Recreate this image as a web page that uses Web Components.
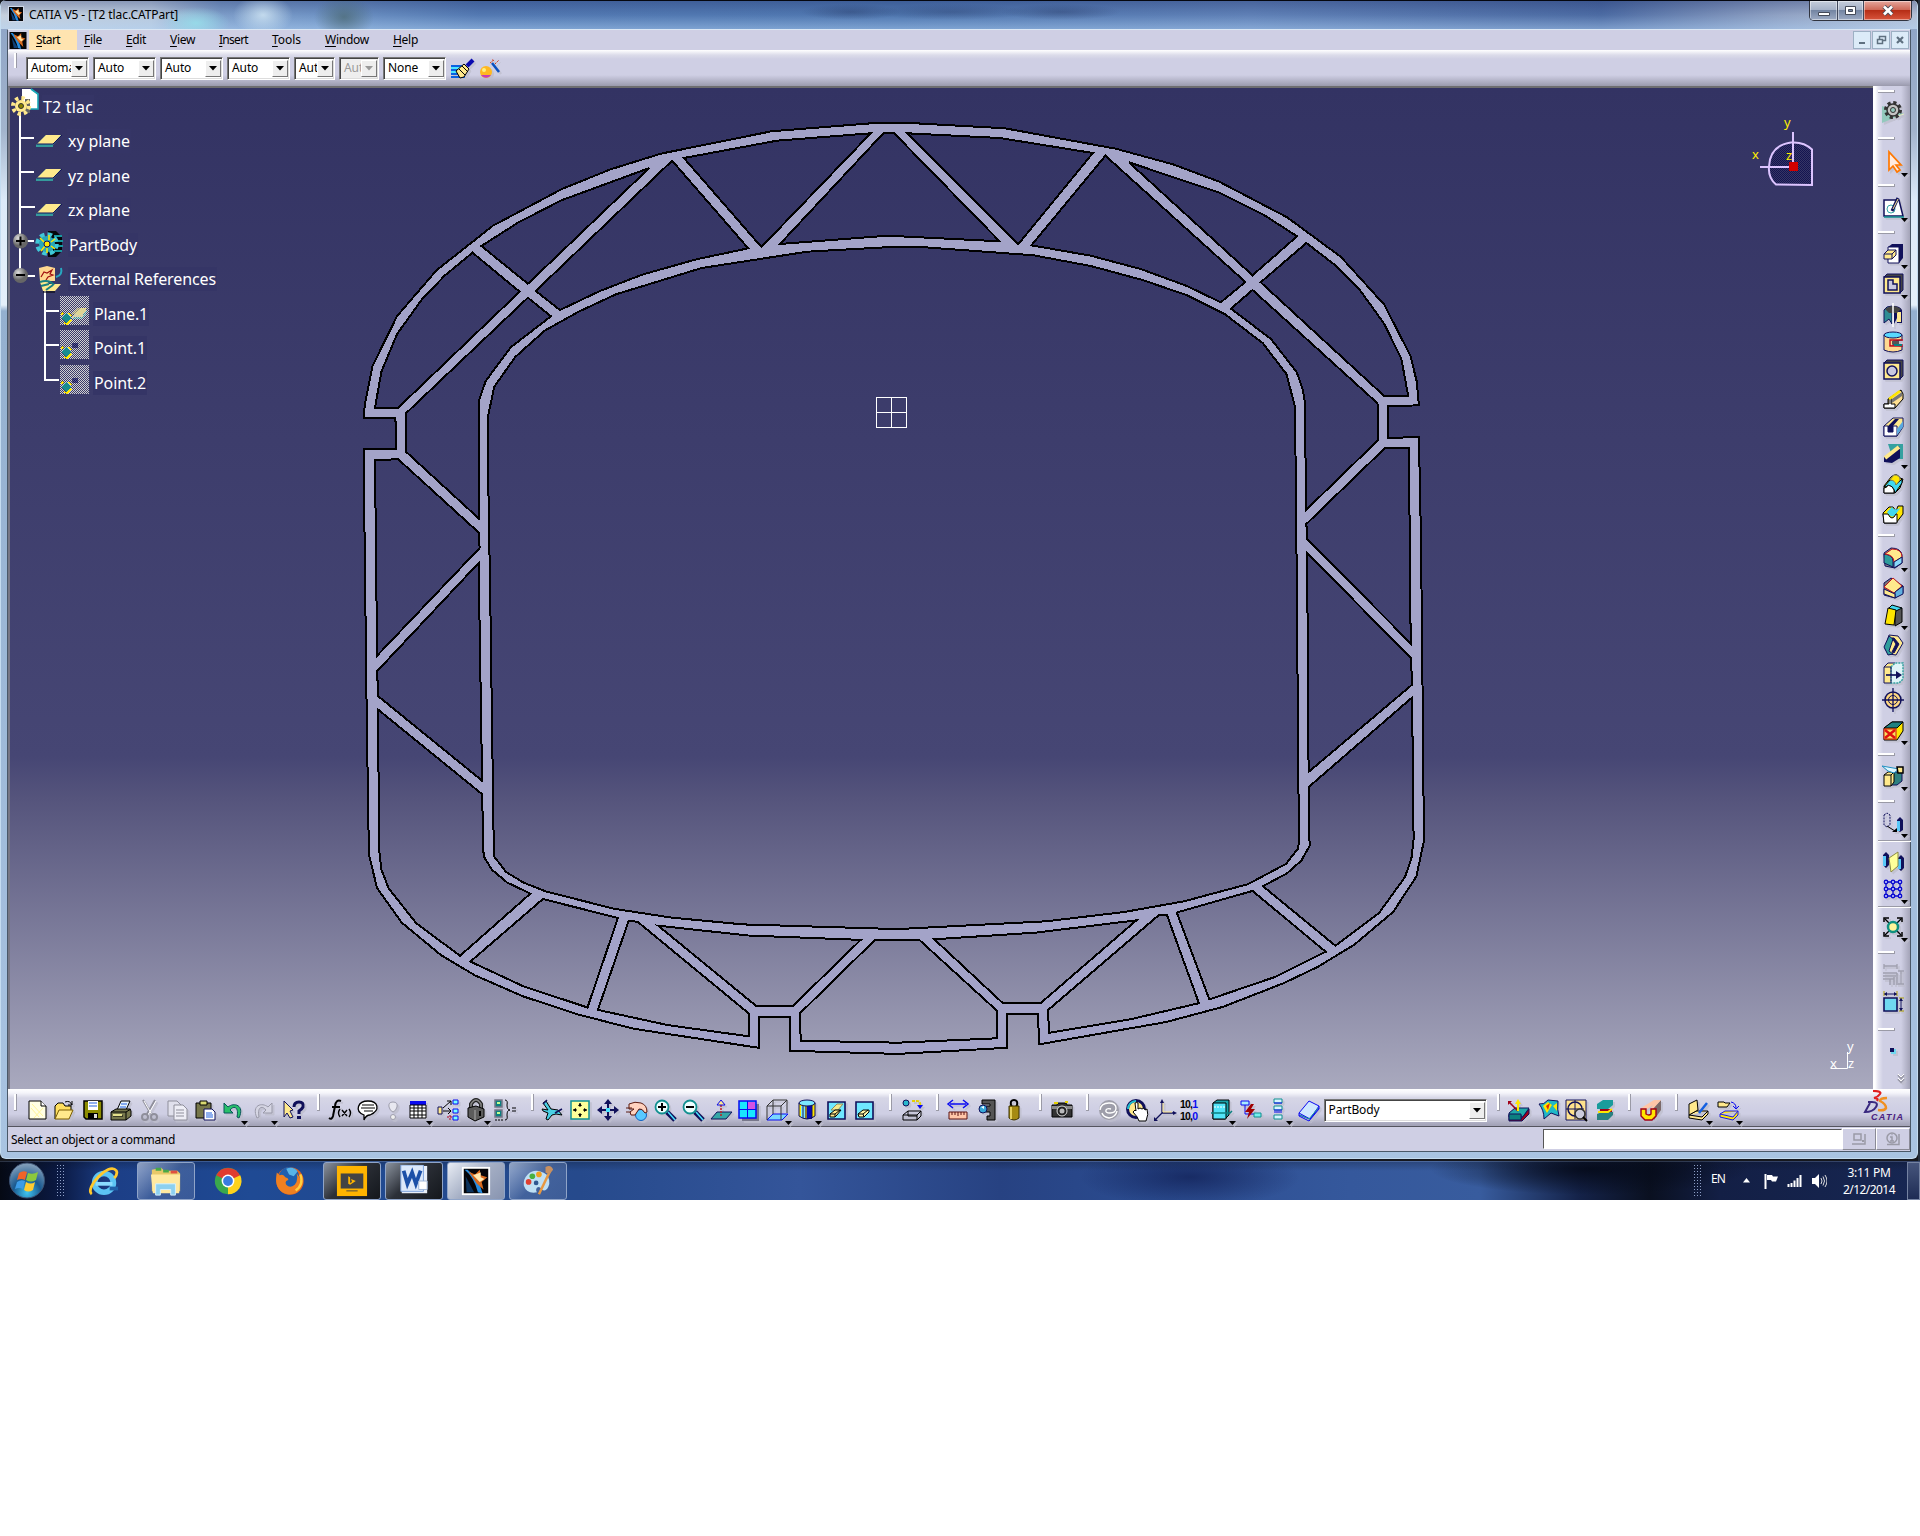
<!DOCTYPE html>
<html lang="en">
<head>
<meta charset="utf-8">
<title>CATIA V5 - [T2 tlac.CATPart]</title>
<style>
    body {
        margin: 0;
        background: #fff;
        font-family: "Noto Sans", "Open Sans", sans-serif;
        font-size: 12px;
        color: #000;
    }
</style>
</head>
<body>
<catia-window></catia-window>
<task-bar></task-bar>

<script>
// 24x24 drawings, one entry per command
const ICONS = {
    // standard
    new: '<path d="M4 3h12l5 5v13H4z" fill="#ffffe4" stroke="#000"/><path d="M16 3v5h5" fill="#fff" stroke="#000"/><path d="M6 10l8 9M7 6l11 12M9 20l9-10" stroke="#fff59a"/>',
    open: '<path d="M3 21V8l3-3h5l2 3h6v4" fill="#ffdf60" stroke="#000"/><path d="M3 21l4-9h14l-4 9z" fill="#ffe98c" stroke="#7a5c00"/><path d="M13 4q5-2 7 3m0-4v4h-4" fill="none" stroke="#000"/>',
    save: '<path d="M3 3h18v18H5l-2-2z" fill="#8c8c00" stroke="#000" stroke-width="1.5"/><path d="M7 3h10v9H7z" fill="#fff"/><path d="M8 5h8M8 8h8" stroke="#2060e0"/><path d="M7 15h10v6H7z" fill="#000"/><path d="M13 16h3v4h-3z" fill="#ddd"/>',
    print: '<path d="M8 12l4-9h9l-4 9z" fill="#e8f4ff" stroke="#000"/><path d="M12 6h6M11 9h6" stroke="#2060e0"/><path d="M2 14l5-3h14l1 2v5l-5 4H2z" fill="#77774d" stroke="#000"/><path d="M2 14h15v8M17 14l5-3M4 18h10" fill="none" stroke="#000"/><path d="M4 16h9v2H4z" fill="#e5e08b"/>',
    cut: '<path d="M6 2l8 14M18 2l-8 14" stroke="#8f8f9b" stroke-width="2"/><path d="M7 3l8 14M19 3l-8 14" stroke="#fff"/><circle cx="8" cy="19" r="3" fill="none" stroke="#8f8f9b" stroke-width="2"/><circle cx="17" cy="19" r="3" fill="none" stroke="#8f8f9b" stroke-width="2"/>',
    copy: '<path d="M3 3h9l4 4v11H3z" fill="#e0e0ec" stroke="#8f8f9b"/><path d="M9 7h9l4 4v11H9z" fill="#eeeef6" stroke="#8f8f9b"/><path d="M11 12h8M11 15h8M11 18h8" stroke="#8f8f9b"/>',
    paste: '<path d="M3 5h15v15H3z" fill="#76764a" stroke="#000"/><path d="M7 3h7v4H7z" fill="#d8d870" stroke="#000"/><path d="M11 11h8l3 3v8H11z" fill="#fff" stroke="#10105a"/><path d="M13 15h6M13 17h7M13 19h7" stroke="#2060e0"/>',
    undo: '<path d="M3 5v10h9l-3-3c4-5 9-3 7 7l2 1c6-13-5-16-11-11z" fill="#28c06a" stroke="#07545a"/>',
    redo: '<path d="M21 5v10h-9l3-3c-4-5-9-3-7 7l-2 1C0 7 11 4 17 9z" fill="#d5d5e3" stroke="#9999a8"/>',
    help: '<path d="M3 3l9 9-3 1 3 6-3 1-3-5-3 4z" fill="#ffe98c" stroke="#10105a"/><path d="M13 9q0-5 5-5t4 5q-1 2-4 4v3" fill="none" stroke="#10105a" stroke-width="3"/><path d="M16 18h4v3h-4z" fill="#10105a"/>',
    fx: '<path d="M13 3q-5-2-6 5L5 18q-1 4-4 2M4 9h8" fill="none" stroke="#000" stroke-width="2"/><path d="M12 11q-3 4 0 8M21 11q3 4 0 8M14 12l5 6M19 12l-5 6" fill="none" stroke="#000" stroke-width="1.4"/>',
    chat: '<path d="M8 17C-2 13 2 3 12 3s13 9 2 14q-4 0-6 5z" fill="#fff" stroke="#000" stroke-width="1.3"/><path d="M6 7h12M5 10h14M8 13h9" stroke="#000" stroke-width="1.2"/>',
    bulb: '<path d="M12 4q5 0 4 5-1 4-4 5-3-1-4-5-1-5 4-5z" fill="#e8e8f0" stroke="#9c9cab"/><circle cx="12" cy="19" r="2.5" fill="#eee" stroke="#9c9cab"/>',
    table: '<path d="M4 3h16v4H4z" fill="#0a0af0"/><path d="M4 7h16v13H4z" fill="#fff" stroke="#000"/><path d="M4 10h16M4 13h16M4 17h16M8 7v13M12 7v13M16 7v13" stroke="#000"/>',
    links: '<path d="M2 9h4v7H2z" fill="#ffe98c" stroke="#10105a"/><path d="M7 10l8-7m-4 0h4v4M7 13h8m-3-3l3 3-3 3" fill="none" stroke="#000"/><path d="M14 17v5M11 19h5" stroke="#b00020" stroke-dasharray="2 1"/><path d="M17 2h5v4h-5zM17 11h5v4h-5zM17 18h5v4h-5z" fill="#7ff" stroke="#0a0af0"/>',
    lock: '<path d="M7 10V6q5-8 10 0v4" fill="none" stroke="#222" stroke-width="4"/><path d="M7 10V6q5-8 10 0v4" fill="none" stroke="#888" stroke-width="1.500"/><path d="M4 10l8-2 8 3v8l-9 4-7-4z" fill="#5c5c5c" stroke="#000"/><path d="M11 12v10" stroke="#aaa"/><path d="M15 13h2v5h-2z" fill="#000"/>',
    braces: '<path d="M2 2h7v7H2zM2 12h7v7H2z" fill="#0c8080" stroke="#778" stroke-width="1.5"/><path d="M4 4h3v2H4zM4 14h3v2H4z" fill="#c2ff90"/><path d="M2 22h8" stroke="#000" stroke-dasharray="2 1"/><path d="M12 2q3 0 2 5 0 5 3 5-3 0-3 5 1 5-2 5M19 10h4M19 13h4" fill="none" stroke="#000"/>',
    // view
    fly: '<path d="M3 5l3-2 5 8 7 1 4 5-6-1-4 1-4 5-2-1 2-6-5-2-1-2 6 1z" fill="#4ad0e4" stroke="#000"/><path d="M15 15l7-4M3 6l4-4" stroke="#10105a" stroke-width="1.5"/>',
    fit: '<path d="M3 3h18v18H3z" fill="#ffff9a" stroke="#109090" stroke-width="1.5"/><path d="M12 5v4m0 6v4M5 12h4m6 0h4" stroke="#000"/><path d="M10 8l2-3 2 3zM10 16l2 3 2-3zM8 10l-3 2 3 2zM16 10l3 2-3 2z" fill="#000"/>',
    pan: '<path d="M12 3v18M3 12h18" stroke="#10105a" stroke-width="2"/><path d="M8 6l4-5 4 5zM8 18l4 5 4-5zM6 8l-5 4 5 4zM18 8l5 4-5 4z" fill="#10105a"/><path d="M10 10h4v4h-4z" fill="#4ae4ff"/>',
    rotate: '<circle cx="16" cy="17" r="5.500" fill="#59c9ff" stroke="#1060c0"/><path d="M4 6q6-3 12-1 6 2 6 9l-2 1q-3-5-6-4l-4 6H6l-1-3 4-3H4z" fill="#ffd2bf" stroke="#5a1a10"/><path d="M1 10h6M1 14h5" stroke="#5a1a10"/>',
    zoomIn: '<path d="M14 14l8 8" stroke="#10105a" stroke-width="5"/><path d="M15 14l7 8" stroke="#4ae4ff" stroke-width="1.5"/><circle cx="9" cy="9" r="6.5" fill="#eff" stroke="#109090" stroke-width="1.8"/><path d="M9 5v8M5 9h8" stroke="#000" stroke-width="2"/>',
    zoomOut: '<path d="M14 14l8 8" stroke="#10105a" stroke-width="5"/><path d="M15 14l7 8" stroke="#4ae4ff" stroke-width="1.5"/><circle cx="9" cy="9" r="6.5" fill="#eff" stroke="#109090" stroke-width="1.8"/><path d="M5 9h8" stroke="#000" stroke-width="2"/>',
    normal: '<path d="M2 21l6-7h15l-6 7z" fill="#35a7a7" stroke="#10105a"/><path d="M12 18V6" stroke="#c02020" stroke-width="1.5" stroke-dasharray="2 1"/><path d="M8 7l4-5 4 5z" fill="#ffe98c" stroke="#0a0af0"/>',
    multi: '<path d="M6 6h17v17H6z" fill="#77778a"/><path d="M3 3h17v17H3z" fill="#18e8ff" stroke="#0a0af0" stroke-width="1.5"/><path d="M12 4h7v7h-7z" fill="#d452e4"/><path d="M3 11.500h17M11.500 3v17" stroke="#0a0af0"/>',
    iso: '<path d="M2 22l6-6h15l-6 6z" fill="#7ad8ff" stroke="#0a0af0"/><path d="M2 22V8l6-6h14v13M2 8h14l6-6M16 8v14M8 2v14" fill="none" stroke="#333"/>',
    shading: '<path d="M4 5v13q8 6 16 0V5z" fill="#ffe600"/><path d="M6 8h4v12H6z" fill="#7ce8ff"/><path d="M12 8h5v13h-5z" fill="#0a0ab0"/><ellipse cx="12" cy="5" rx="8" ry="3" fill="#7ce8ff" stroke="#10105a"/><path d="M4 5v13q8 6 16 0V5M8 8v12M11 8v13M17 7v13" fill="none" stroke="#10105a"/>',
    hide: '<path d="M4 4h17v17H4z" fill="#6fe8ff" stroke="#10105a" stroke-width="1.6"/><path d="M7 12l6-6h6l-5 6z" fill="#f4e98c" stroke="#8a8a60"/><path d="M6 16l5-4h6l-4 5-2 2H6z" fill="#ffe98c" stroke="#000"/><path d="M6 16h5v3M11 16l5-4" fill="none" stroke="#000"/>',
    swap: '<path d="M4 4h17v17H4z" fill="#6fe8ff" stroke="#10105a" stroke-width="1.6"/><path d="M6 16l5-4h6v2l-5 5H7z" fill="#fff6a8" stroke="#000"/><path d="M6 16h5l1 3M11 16l5-4" fill="none" stroke="#000"/>',
    catalog: '<circle cx="6" cy="5" r="3" fill="#28b8cc" stroke="#10105a"/><path d="M12 3h5q4 0 3 5" fill="none" stroke="#e4d000" stroke-width="2" stroke-dasharray="3 1"/><path d="M17 7h6l-3 4z" fill="#0a0af0"/><path d="M3 17l5-4h13v5l-4 4H3zM3 17h14v5M17 17l4-4M8 13v5h9" fill="none" stroke="#000"/>',
    measure: '<path d="M4 6h16" stroke="#0a0af0" stroke-width="1.5"/><path d="M7 2L2 6l5 4M17 2l5 4-5 4" fill="none" stroke="#0a0af0" stroke-width="1.5"/><path d="M3 14h18v7H3z" fill="#ffc6a8" stroke="#5a1010"/><path d="M6 14v3M9 14v3M12 14v4M15 14v3M18 14v3" stroke="#5a1010"/>',
    clamp: '<path d="M7 2h13v20h-8v-4h3v-4h-4V8h4V6H7z" fill="#555" stroke="#000"/><circle cx="8" cy="11" r="4" fill="#38a7d8" stroke="#10105a"/><path d="M6 9l3-1v3z" fill="#fff"/>',
    mass: '<path d="M9 7q-1-5 3-5t3 5l-1 2h-4z" fill="none" stroke="#000" stroke-width="2"/><path d="M7 8h10v12q-5 4-10 0z" fill="#a58a12" stroke="#3a3000"/><path d="M9 9v12" stroke="#e4cf5c" stroke-width="2"/>',
    camera: '<path d="M2 7h5l1-2h8l1 2h5v12H2z" fill="#333" stroke="#000"/><path d="M2 8h20v3H2z" fill="#888"/><circle cx="12" cy="13" r="5" fill="#222" stroke="#ddd"/><circle cx="12" cy="13" r="2.5" fill="#bbb"/><path d="M4 5h4M15 4h3" stroke="#e4d000" stroke-width="2"/>',
    // tools
    update: '<circle cx="12" cy="12" r="10" fill="#9e9eaa"/><path d="M3 12q1-7 9-7 7 0 7 5t-6 5q-5 0-4-3 1-2 5-1M20 13q-1 6-8 7-6-1-7-5" fill="none" stroke="#fff" stroke-width="1.4"/>',
    hand: '<circle cx="11" cy="11" r="8.500" fill="#ffe98c" stroke="#10105a" stroke-width="3"/><path d="M3 11a8 8 0 0 1 8-8" fill="none" stroke="#20c0d0" stroke-width="2"/><path d="M10 5q2-1 3 0v6l2-1 2 1 2-1 1 2 2-1q2 5-1 12h-7q-1-4-6-9l2-2 1 1z" fill="#fff" stroke="#000"/>',
    axes: '<path d="M9 3v12h12M9 15l-7 7" fill="none" stroke="#10105a" stroke-width="1.300"/><path d="M7 5l2-4 2 4zM20 13l4 2-4 2zM1 19v4h4z" fill="#10105a"/><path d="M10 5v9h9" stroke="#ffe98c" fill="none"/>',
    box: '<path d="M4 5l4-3h12v15l-4 4H4z" fill="#18a0a8" stroke="#000"/><path d="M4 5h13v16H4z" fill="#52e4f8" stroke="#000"/><path d="M2 15h19l2-2" fill="none" stroke="#0a8080" stroke-width="1.500"/><path d="M5 9h11" stroke="#fff" stroke-dasharray="2 1"/>',
    bolt: '<path d="M2 3h8v4H2z" fill="#aef" stroke="#0a0af0"/><path d="M6 7v9h9" fill="none" stroke="#0a0af0"/><path d="M15 15h7v4h-7z" fill="#7ee" stroke="#109090"/><path d="M12 6l-6 8h4l-2 7 8-10h-4l3-5z" fill="#a00000"/>',
    steps: '<path d="M8 1h8v4H8zM8 8h8v4H8zM8 17h8v4H8z" fill="#d8f4ff" stroke="#109090"/><path d="M8 5h8M8 12h8M8 14h8" stroke="#0a0af0"/>',
    slab: '<path d="M2 15L12 3l10 5-9 13z" fill="#cfe8ff" stroke="#0a0af0"/><path d="M2 15v3l10 5 10-12V8M2 17l11 4 9-11" fill="none" stroke="#0a0af0"/><path d="M3 17l9 4 9-11" stroke="#20a0a0" fill="none"/>',
    draftA: '<path d="M2 15l6-5h14l-6 9H2z" fill="#20a8a8" stroke="#10105a"/><path d="M14 21l8-10v5l-7 7H2v-6h12z" fill="#a00018" stroke="#10105a"/><path d="M2 16h12v6H2z" fill="#0c8080" stroke="#10105a"/><path d="M2 4l9 9" stroke="#a00018" stroke-width="1.500"/><path d="M11 13V4" stroke="#ffe600" stroke-width="2"/><path d="M8 6l3-5 3 5z" fill="#ffe600"/><path d="M1 7V3h4z" fill="#a00018"/>',
    curv: '<path d="M2 6q5 1 9-4l10 1q-1 9 1 15l-8-3-7 6q0-9-5-15z" fill="#20b8c8" stroke="#10105a"/><path d="M6 8l5-4 4 3-5 8zM16 8l4-3v8z" fill="#ffe600"/><path d="M9 8l4-3-2 7z" fill="#e03000"/>',
    tap: '<path d="M2 2h20v20H2z" fill="#ffe28c" stroke="#10105a"/><circle cx="11" cy="11" r="7" fill="none" stroke="#10105a" stroke-width="1.500"/><path d="M11 2v19M2 11h18" stroke="#10105a"/><circle cx="16" cy="16" r="5" fill="#ccd" stroke="#333" stroke-width="1.600"/><path d="M19 19l4 4" stroke="#000" stroke-width="2"/>',
    wall: '<path d="M4 6l6-4h10v5l-5 4H4z" fill="#1a9c9c"/><path d="M7 11h12v4H7z" fill="#a00018"/><path d="M4 16l5-2h11v3l-5 5H4z" fill="#2a8080"/><path d="M5 14h10l4-3" fill="none" stroke="#ffe600" stroke-width="2"/>',
    magnet: '<path d="M14 10l8-8v10l-7 10z" fill="#7b6a6a"/><path d="M2 10L15 2h7l-8 9h-3l3-4-7 5z" fill="#ffc6a8"/><path d="M2 11h5v5q3 2 5 0v-5h5v7l-4 4H6l-4-4z" fill="#ffe600" stroke="#a00018" stroke-width="1.400"/>',
    bookA: '<path d="M3 17l7-4h12l-6 6zM3 17v3l13 2 6-6v-3" fill="#ffe98c" stroke="#000"/><path d="M3 17V6l8-4 1 10z" fill="#ffe98c" stroke="#000"/><path d="M21 5l-8 10" stroke="#1560e0" stroke-width="2.500"/>',
    bookB: '<path d="M2 4h6l1 1h5l-3 4H2z" fill="#ffe98c" stroke="#000"/><path d="M15 4q5 1 5 6M17 8l3 3 3-3" fill="none" stroke="#0a0af0"/><path d="M4 16l5-3h13l-5 6zM4 16v3l13 3 5-5v-4" fill="#ffe600" stroke="#1a1ae0"/>',
    // graphic properties
    brush: '<path d="M1 9h11M1 13h12M1 17h13M1 20h14" stroke="#0a60e0" stroke-width="2"/><path d="M1 11h10M1 15h11" stroke="#4ae4ff" stroke-width="2"/><path d="M6 14l8-7 5 5-5 8-4 1z" fill="#ffe98c" stroke="#000"/><path d="M9 12l6 6M12 9l6 6" stroke="#000"/><path d="M17 9l6-6" stroke="#0a0ab0" stroke-width="4"/>',
    wizard: '<circle cx="8" cy="15" r="6" fill="#ffb820"/><path d="M3 18a6 6 0 0 0 10 0z" fill="#c83cb4"/><circle cx="6" cy="13" r="2" fill="#fff080"/><path d="M14 6l7 9" stroke="#0a50c0" stroke-width="2.500"/><path d="M12 6l4-3m1 4l4-4m-7 0h1" stroke="#d04020" stroke-dasharray="2 1"/>',
    // part design
    gear: '<path d="M1 8l22 8L1 25z" fill="#93c9bd"/><path d="M14 19l9-3" stroke="#e8e8c0"/><circle cx="12" cy="12" r="7" fill="none" stroke="#333" stroke-width="4" stroke-dasharray="3 2.500"/><circle cx="12" cy="12" r="6" fill="#c4c4c4" stroke="#333" stroke-width="1.500"/><circle cx="12" cy="12" r="2.500" fill="#93c9bd" stroke="#333"/>',
    arrow: '<path d="M8 2v18l4-4 4 6 3-2-4-5h5z" fill="#ffece0" stroke="#ff7800" stroke-width="1.700"/>',
    sketch: '<path d="M3 5h15l4 16H3z" fill="#fff" stroke="#10105a" stroke-width="1.500"/><path d="M3 22h20" stroke="#109090" stroke-width="1.500"/><circle cx="10" cy="14" r="4" fill="none" stroke="#35a7a7"/><path d="M11 16l6-13" stroke="#10105a" stroke-width="3"/><path d="M12 14l5-10" stroke="#ffe98c"/>',
    pad: '<path d="M7 5l4-3h11v14l-4 5H7z" fill="#10105a"/><path d="M7 5h11v16H7z" fill="#fff" stroke="#10105a"/><path d="M3 12l4-4h8v5l-4 4H3z" fill="#ffe98c" stroke="#10105a"/><path d="M3 12h8v5M11 12l4-4" fill="none" stroke="#10105a"/>',
    pocket: '<path d="M3 5l3-3h16v16l-3 3z" fill="#444" stroke="#10105a"/><path d="M3 5h16v16H3z" fill="#ffe98c" stroke="#10105a" stroke-width="1.500"/><path d="M7 8h5v4h4v6H7z" fill="#c8c8e0" stroke="#10105a" stroke-width="1.500"/>',
    shaft: '<path d="M3 7q2-4 8-4v18l-3-5-5 4z" fill="#2e8c94" stroke="#10105a"/><path d="M21 7q-2-4-8-4v18l3-6v5h5z" fill="#10105a"/><path d="M16 9h4v10h-4z" fill="#ffe98c"/><path d="M4 6q8-6 16 0l-4 4H8z" fill="#444"/><path d="M12 0v24" stroke="#fff" stroke-width="1.500"/>',
    groove: '<path d="M3 5v15q9 4 18 0v-4l-9-1v-4l9-1V5z" fill="#ffd890" stroke="#10105a"/><ellipse cx="12" cy="5" rx="9" ry="3" fill="#59d8ff" stroke="#10105a"/><path d="M22 10H9v6h13M9 16l13-1" fill="none" stroke="#c01020" stroke-width="1.500"/><path d="M11 11h7v3h-7z" fill="#555"/><path d="M13 15h8" stroke="#0a8080" stroke-width="2"/>',
    hole: '<path d="M3 5l3-3h16v16l-3 3z" fill="#444" stroke="#10105a"/><path d="M3 5h16v16H3z" fill="#ffe98c" stroke="#10105a" stroke-width="1.500"/><circle cx="11" cy="13" r="5" fill="#c8c8e0" stroke="#10105a" stroke-width="1.500"/>',
    rib: '<path d="M3 17h4V12l13-9 2 4v5l-8 9H3z" fill="#ffdf90" stroke="#000"/><path d="M8 18l13-9v-4L8 14z" fill="#777"/><path d="M3 17h5v-5l2-1v6h4v4H3z" fill="#fff" stroke="#000"/><path d="M8 12L19 4" stroke="#ffe600" stroke-width="2.500"/>',
    slot: '<path d="M3 12L12 4h10v9l-6 9H3z" fill="#ffe98c" stroke="#10105a"/><path d="M3 12h4v6h5v-6h4v10H3z" fill="#fff" stroke="#10105a"/><path d="M7 12l7-7h4l-6 7v6H7z" fill="#10105a"/><path d="M16 15l6-8v6l-6 8z" fill="#5aa8e0"/>',
    stiffener: '<path d="M7 2h15v15H12z" fill="#35a0a0"/><path d="M3 15L18 4l1 3v9l-8 5-8-1z" fill="#10105a"/><path d="M4 16L18 5" stroke="#ffe98c" stroke-width="4"/>',
    loft: '<path d="M3 14l7-9q6-5 9 1l3 1-3 9-5 5H3z" fill="#ffe600" stroke="#000"/><path d="M3 15l6-7q7-1 6 5l6-6v4l-7 10q-2-8-6-7z" fill="#40d8f0" stroke="#000"/><path d="M9 8l4-5q6 0 6 5l-4 5q-1-5-6-5z" fill="#ffe600" stroke="#886"/><path d="M3 16q3 0 4-3 5 1 6 5v3H3z" fill="#fff" stroke="#000"/>',
    rmloft: '<path d="M2 12l6-6h4l3 4 2-5h5v8l-7 9H3z" fill="#ffe600" stroke="#000"/><path d="M6 11l5-5q3 5 9 0l-5 7q-4 6-9-2z" fill="#40d8f0"/><path d="M2 13h5q4 8 8 0h1v9H3z" fill="#fff" stroke="#000"/>',
    fillet: '<path d="M3 8l7-5q10 0 11 7v8l-7 5-10-2z" fill="#888" stroke="#10105a"/><path d="M3 9v9l9 4v-6q0-6-9-7z" fill="#2e9c9c" stroke="#10105a"/><path d="M4 9l7-5q10 0 10 8l-8 5q0-7-9-8z" fill="#ffe98c" stroke="#c01020"/><path d="M13 17l8-5v6l-8 5z" fill="#88d8f8" stroke="#10105a"/>',
    chamfer: '<path d="M3 8l7-5 12 8v7l-8 5-11-3z" fill="#777" stroke="#10105a"/><path d="M3 12l9-9 9 8-8 7z" fill="#ffe98c" stroke="#c01020"/><path d="M14 17l8-6v8l-8 4z" fill="#60b0e0" stroke="#10105a"/><path d="M3 14l11 5v4L3 19z" fill="#ffe98c" stroke="#10105a"/>',
    draft: '<path d="M14 6l7-1v14l-7 4z" fill="#555" stroke="#000"/><path d="M7 6l4-4 10 3-6 3z" fill="#40d8f0" stroke="#000"/><path d="M7 5l8 2-2 15-9-1z" fill="#ffe600" stroke="#000"/>',
    shell: '<path d="M8 2l9 1 5 7-7 12-7-1-4-5z" fill="#ffe98c" stroke="#10105a"/><path d="M3 14l5-11 4 3-4 12 4 3-5 1z" fill="#2e9c9c" stroke="#10105a"/><path d="M13 5l5 6-5 9-2-1 4-8-4-6z" fill="#10105a" stroke="#10105a"/>',
    thickness: '<path d="M3 6l4-4h7v16l-3 4H3z" fill="#ffe98c" stroke="#10105a"/><path d="M10 6l4-4h8v16l-4 4h-8z" fill="#dff4f8" stroke="#35a0a0" stroke-dasharray="2 1" stroke-width="1.500"/><path d="M3 6h7v16" fill="none" stroke="#10105a"/><path d="M5 14h12" stroke="#10105a" stroke-width="1.700"/><path d="M15 10l6 4-6 4z" fill="#10105a"/>',
    thread: '<circle cx="12" cy="12" r="8" fill="#ffd880" stroke="#10105a" stroke-width="1.500"/><circle cx="12" cy="12" r="4.500" fill="none" stroke="#10105a"/><path d="M12 0v24M1 12h22" stroke="#10105a" stroke-width="1.300"/>',
    remface: '<path d="M3 10l8-6h11v9l-6 9H3z" fill="#ffe600" stroke="#000"/><path d="M3 10l8-6h11l-6 6z" fill="#208080" stroke="#000"/><path d="M3 11h12v10H3z" fill="#f8e060" stroke="#d01010"/><path d="M4 12l10 8M14 12L4 20" stroke="#e01010" stroke-width="2.500"/>',
    split: '<path d="M9 8h12v9l-5 4H9z" fill="#2e8080" stroke="#10105a"/><path d="M3 11l4-3h6v10l-3 4H3z" fill="#ffe98c" stroke="#000"/><path d="M3 11h7v11M10 11l3-3" fill="none" stroke="#000"/><path d="M1 2l17 3-5 4-6-2z" fill="#dff6ff" stroke="#2090c0"/><path d="M16 3h6v6h-5z" fill="#ffe98c" stroke="#000" stroke-width="1.500"/>',
    translate: '<path d="M3 4l3-2 3 2v10l-3 2-3-2z" fill="none" stroke="#10105a" stroke-dasharray="2 1"/><path d="M6 15l8 5" stroke="#000"/><path d="M11 21h5v-4z" fill="#000"/><path d="M16 9l3-3 3 3v10l-3 2-3-2z" fill="#10105a"/><path d="M16 10h3v10h-3z" fill="#58c8f8"/>',
    mirror: '<path d="M2 6l3-3 3 3v10l-3 3-3-3zM17 9l3-3 3 3v10l-3 3-3-3z" fill="#10105a"/><path d="M2 7h3v10H2zM17 10h3v10h-3z" fill="#58c8f8"/><path d="M8 9l9-6v14l-7 6z" fill="#ffff9a" stroke="#8a8a40"/>',
    pattern: '<path d="M5 5h14v14H5zM12 5v14M5 12h14" fill="none" stroke="#0a0ad0" stroke-width="1.300"/><g fill="#cfd8ff" stroke="#0a0ad0" stroke-width="1.400"><circle cx="5" cy="5" r="1.700"/><circle cx="12" cy="5" r="1.700"/><circle cx="19" cy="5" r="1.700"/><circle cx="5" cy="12" r="1.700"/><circle cx="12" cy="12" r="1.700"/><circle cx="19" cy="12" r="1.700"/><circle cx="5" cy="19" r="1.700"/><circle cx="12" cy="19" r="1.700"/><circle cx="19" cy="19" r="1.700"/></g>',
    scale: '<path d="M4 4l16 16M20 4L4 20" stroke="#000" stroke-width="1.300"/><path d="M3 7V3h5M16 3h5v4M3 17v4h5M16 21h5v-4" fill="none" stroke="#000" stroke-width="1.500"/><circle cx="12" cy="12" r="5" fill="#fff59a" stroke="#109080" stroke-width="2.500"/>',
    constrOff: '<path d="M3 4h13M3 2v5M16 2v5M20 9v13M17 9h6M17 22h6" fill="none" stroke="#a0a0ae" stroke-width="1.300"/><path d="M2 11h14M2 14h13M2 17h11M9 17v6M13 15v8M16 11v12" fill="none" stroke="#a0a0ae" stroke-width="1.500"/>',
    constr: '<path d="M3 8h13v13H3z" fill="#70d8f0" stroke="#10105a" stroke-width="1.600"/><path d="M3 4h13M20 8v13" stroke="#10105a"/><path d="M3 1v5M16 1v5M18 8h5M18 21h5" stroke="#b0a000"/><path d="M3 4l3-2v4zM16 4l-3-2v4zM20 8l-2 3h4zM20 21l-2-3h4z" fill="#10105a"/>',
    point: '<path d="M10 10h5v5h-5z" fill="#70d8f0"/><path d="M9 9h4v4H9z" fill="#10105a"/>',
    more: '<path d="M17 7l3 3 3-3M17 11l3 3 3-3" fill="none" stroke="#9a9aa8" stroke-width="2"/><path d="M17 6l3 3 3-3M17 10l3 3 3-3" fill="none" stroke="#fff"/>',
    // specification tree
    part: '<path d="M12-6h9l7 6v14h-16z" fill="#fff"/><path d="M21-6l7 5v15h-9" fill="none" stroke="#18a8b8" stroke-width="1.600"/><path d="M15 4h5v14h-5z" fill="#666"/><circle cx="11" cy="11" r="8" fill="none" stroke="#ffe98c" stroke-width="4" stroke-dasharray="3.300 3"/><circle cx="11" cy="11" r="6" fill="#ffe98c"/><circle cx="11" cy="11" r="2.500" fill="#8a8200" stroke="#333"/>',
    plane: '<path d="M-1 15l10-10h16l-9 10v2H-1z" fill="#359a9c"/><path d="M0 14l9-9h15l-8 9z" fill="#ffe98c"/><path d="M0 14h16l9-9" fill="none" stroke="#10105a"/>',
    body: '<path d="M11-2h8l6 6v14l-6 6h-8z" fill="#05080c"/><path d="M17 3h8M18 8h8M18 13h8M17 18h8" stroke="#1898a0" stroke-width="2"/><circle cx="10" cy="11" r="9.500" fill="none" stroke="#40c8d8" stroke-width="4.500" stroke-dasharray="4.500 3"/><circle cx="10" cy="11" r="8" fill="#28a8b8"/><path d="M3 5l4 4m5-7v5m6-1l-4 3m4 7l-4-3m-4 7v-5m-6 3l4-5" stroke="#ffe600" stroke-width="1.500"/><circle cx="10" cy="11" r="3" fill="#ffe600" stroke="#10105a"/>',
    extref: '<path d="M2 0l8-2 8 2v13H3z" fill="#ffd890"/><path d="M4 9l3-5 3 1 5-3-2 4 3 1-5 2-2 3" fill="none" stroke="#a01010" stroke-width="1.200"/><path d="M24 0q2 7-5 9" fill="none" stroke="#28a8c0" stroke-width="2"/><path d="M3 14q8-2 9 2h12l-6 7H6z" fill="#ffe98c"/><path d="M3 14q9-3 14 3M4 18l8-2M9 22l7-5" fill="none" stroke="#1a8080" stroke-width="2"/><path d="M6 24h12" stroke="#000"/>',
};

const DROP = '<path d="M20 23h7l-3.500 4z" fill="#000"/>';
const svg = (name, drop, size = 24) => `<svg width="${size}" height="${size}" viewBox="0 0 24 24">${ICONS[name]}${drop ? DROP : ''}</svg>`;

const GLOBE = `<svg class="catia" viewBox="0 0 16 16"><path d="M0 0h16v16H0z" fill="#050508"/><path d="M1 1q5 6 7 14l3 1q-2-9-8-15z" fill="#268ce0"/><path d="M2 5l6 10H4z" fill="#0d3f78"/><path d="M4 2l4 2 3-3v4l4 1-3 3 1 5-4-4-4-5z" fill="#d86a20"/><path d="M7 5l4-2v3l2 1-2 2z" fill="#ffe0a0"/></svg>`;

// Text stretched or squeezed to the width given in "w"
class UiLabel extends HTMLElement {
    constructor() {
        super();
        this.attachShadow({ mode: 'open' });
        this.shadowRoot.innerHTML = `
        <style>
            :host { display: inline-block; }
            span { white-space: pre; }
            u { text-underline-offset: 2px; }
        </style>
        <span></span>`;
    }

    connectedCallback() {
        const span = this.shadowRoot.querySelector('span');
        const text = this.getAttribute('text');
        if (this.hasAttribute('key')) {
            span.innerHTML = `<u>${text[0]}</u>${text.slice(1)}`;
        } else {
            span.textContent = text;
        }
        const w = Number(this.getAttribute('w'));
        if (w) {
            const natural = span.getBoundingClientRect().width;
            span.style.letterSpacing = (w - natural) / text.length + 'px';
            this.style.width = w + 'px';
        }
    }
}
customElements.define('ui-label', UiLabel);

class UiCombo extends HTMLElement {
    constructor() {
        super();
        this.attachShadow({ mode: 'open' });
        const off = this.hasAttribute('disabled');
        this.shadowRoot.innerHTML = `
        <style>
            :host {
                display: flex;
                box-sizing: border-box;
                height: 23px;
                background: ${off ? '#eee' : '#fff'};
                border: 1px solid;
                border-color: #777 #fff #fff #777;
                box-shadow: inset 1px 1px #444, inset -1px -1px #ddd;
                color: ${off ? '#999' : '#000'};
            }
            .text { flex: 1; overflow: hidden; padding-left: 4px; line-height: 19px; white-space: nowrap; letter-spacing: -.1px; }
            .arrow {
                box-sizing: border-box;
                width: 16px;
                margin: 2px 1px 2px 0;
                background: #eee;
                border: 1px solid;
                border-color: #fff #777 #777 #fff;
                display: flex;
                align-items: center;
                justify-content: center;
            }
        </style>
        <div class="text">${this.getAttribute('value')}</div>
        <div class="arrow"><svg width="8" height="5"><path d="M0 0h8l-4 4.500z" fill="${off ? '#999' : '#000'}"/></svg></div>`;
    }
}
customElements.define('ui-combo', UiCombo);

// Row or column of commands; items are [name, centre, hasMenu] along the strip
const STRIPS = {
    bottom: [
        ['grip', 15], ['new', 37], ['open', 64], ['save', 93], ['print', 121], ['cut', 149], ['copy', 177], ['paste', 205],
        ['undo', 233, 1], ['redo', 263, 1], ['help', 293], ['grip', 318], ['fx', 340], ['chat', 368], ['bulb', 393],
        ['table', 418, 1], ['links', 448], ['lock', 476, 1], ['braces', 505], ['grip', 532], ['fly', 552], ['fit', 580],
        ['pan', 608], ['rotate', 637], ['zoomIn', 665], ['zoomOut', 693], ['normal', 721], ['multi', 748], ['iso', 777, 1],
        ['shading', 807, 1], ['hide', 836], ['swap', 864], ['grip', 890], ['catalog', 912], ['grip', 937], ['measure', 958],
        ['clamp', 987], ['mass', 1014], ['grip', 1040], ['camera', 1062], ['grip', 1087], ['update', 1109], ['hand', 1137],
        ['axes', 1165], ['digits', 1192], ['box', 1221, 1], ['bolt', 1251], ['steps', 1278, 1], ['slab', 1309],
        ['combo', 1405], ['grip', 1498], ['draftA', 1519], ['curv', 1549], ['tap', 1576], ['wall', 1605], ['grip', 1629],
        ['magnet', 1651], ['grip', 1676], ['bookA', 1698, 1], ['bookB', 1728, 1],
    ],
    side: [
        ['grip', 91], ['gear', 110], ['grip', 138], ['arrow', 162, 1], ['grip', 185], ['sketch', 207, 1], ['grip', 232],
        ['pad', 254, 1], ['pocket', 284, 1], ['shaft', 315], ['groove', 342], ['hole', 370], ['rib', 399], ['slot', 426],
        ['stiffener', 454, 1], ['loft', 484], ['rmloft', 513], ['grip', 535], ['fillet', 557, 1], ['chamfer', 587],
        ['draft', 615, 1], ['shell', 645], ['thickness', 673], ['thread', 700], ['remface', 730, 1], ['grip', 754],
        ['split', 776, 1], ['grip', 801], ['translate', 823, 1], ['line', 841], ['mirror', 861], ['pattern', 889, 1],
        ['line', 907], ['scale', 927, 1], ['grip', 952], ['constrOff', 974], ['constr', 1002], ['grip', 1029],
        ['point', 1051], ['more', 1080],
    ],
};
const SIZES = { grip: 3, line: 2, combo: 163 };

class ToolStrip extends HTMLElement {
    constructor() {
        super();
        this.attachShadow({ mode: 'open' });
        const side = this.getAttribute('set') === 'side';
        let end = side ? 86 : 8;
        let html = '';
        for (const [name, centre, menu] of STRIPS[this.getAttribute('set')]) {
            const size = SIZES[name] || 24;
            const gap = centre - size / 2 - end;
            end = centre + size / 2;
            let body = '';
            if (name === 'combo') body = '<ui-combo value="PartBody"></ui-combo>';
            else if (name === 'digits') body = '<div class="digits"><div>10,<b>1</b></div><div>10,<b>0</b></div></div>';
            else if (ICONS[name]) body = svg(name, menu);
            html += `<div class="item ${name}" style="margin-${side ? 'top' : 'left'}:${gap}px">${body}</div>`;
        }
        this.shadowRoot.innerHTML = `
        <style>
            :host { display: flex; flex-direction: ${side ? 'column' : 'row'}; align-items: ${side ? 'flex-start' : 'center'}; }
            .item { flex: none; width: 24px; height: 24px; ${side ? 'margin-left: 8px;' : ''} }
            svg { display: block; overflow: visible; filter: drop-shadow(2px 2px 0 rgba(190, 190, 205, .8)); }
            .grip {
                box-sizing: border-box;
                ${side ? 'width: 17px; height: 3px; margin-left: 5px;' : 'width: 3px; height: 17px; align-self: flex-start; margin-top: 0;'}
                border: solid #9a9aa6;
                border-width: 0 1px 1px 0;
                background: #fff;
            }
            .line { width: 33px; height: 2px; margin-left: 5px; background: #9a9aa6; border-bottom: 1px solid #fff; box-sizing: border-box; }
            .combo { width: 163px; height: 23px; }
            .digits { font: bold 10.5px/12px "Liberation Sans", sans-serif; letter-spacing: -.8px; white-space: nowrap; }
            .digits b { color: #0a0af0; }
        </style>${html}`;
    }
}
customElements.define('tool-strip', ToolStrip);

class TitleBar extends HTMLElement {
    constructor() {
        super();
        this.attachShadow({ mode: 'open' });
        this.shadowRoot.innerHTML = `
        <style>
            :host {
                display: flex;
                align-items: center;
                box-sizing: border-box;
                height: 29px;
                padding-left: 7px;
                border-top: 1px solid #05070f;
                background:
                    radial-gradient(ellipse 50px 8px at 850px 11px, rgba(25, 35, 75, .3), transparent),
                    radial-gradient(ellipse 80px 8px at 950px 11px, rgba(25, 35, 75, .25), transparent),
                    radial-gradient(ellipse 60px 8px at 1060px 11px, rgba(25, 35, 75, .3), transparent),
                    radial-gradient(ellipse 30px 20px at 262px 14px, rgba(220, 240, 250, .75), transparent),
                    radial-gradient(ellipse 30px 22px at 343px 16px, rgba(75, 105, 115, .75), transparent),
                    radial-gradient(ellipse 34px 16px at 195px 22px, rgba(150, 225, 235, .8), transparent),
                    linear-gradient(to bottom, rgba(20, 35, 95, .3), transparent 50%, rgba(180, 215, 250, .45)),
                    linear-gradient(to right, #c5d0dd 0, #b9c9dd 150px, #7c9cc8 220px, #6f93c4 320px, #5379b2 480px, #4f77b0 900px, #5f80b6 1250px, #4c6ba3 1600px, #90a2c4 1780px, #b4c1d6);
            }
            .catia { width: 14px; height: 14px; margin-right: 5px; border: 1px solid #cfd8e8; }
            .catia, ui-label { position: relative; top: -1px; }
            .space { flex: 1; }
            .caption { display: flex; align-self: flex-start; height: 19px; margin-right: 5px; border: 1px solid #30343f; border-top: 0; border-radius: 0 0 5px 5px; overflow: hidden; }
            .caption div { width: 27px; display: flex; justify-content: center; align-items: center; background: linear-gradient(#c5cddb, #a6b2c8 45%, #7485a2 50%, #9dabc4); box-shadow: inset 0 0 0 1px rgba(255, 255, 255, .45); border-right: 1px solid #40485c; }
            .caption div.max { width: 25px; }
            .caption div.close { width: 47px; background: linear-gradient(#e5a79d, #cf6a59 45%, #b62e17 50%, #d8553c); border: 0; }
        </style>
        ${GLOBE}<ui-label w="149" text="CATIA V5 - [T2 tlac.CATPart]"></ui-label>
        <div class="space"></div>
        <div class="caption">
            <div><svg width="14" height="12"><path d="M1.500 7.500h11v3h-11z" fill="#fff" stroke="#444a58"/></svg></div>
            <div class="max"><svg width="13" height="11"><path d="M1.500 1.500h10v8h-10z" fill="#fff" stroke="#444a58"/><path d="M4.500 4.500h4v2h-4z" fill="#7485a2" stroke="#444a58"/></svg></div>
            <div class="close"><svg width="12" height="11"><path d="M2 1.500l8 8M10 1.500l-8 8" stroke="#444a58" stroke-width="4.500"/><path d="M2 1.500l8 8M10 1.500l-8 8" stroke="#fff" stroke-width="2.700"/></svg></div>
        </div>`;
    }
}
customElements.define('title-bar', TitleBar);

class MenuBar extends HTMLElement {
    constructor() {
        super();
        this.attachShadow({ mode: 'open' });
        const items = [['Start', 24, 24], ['File', 18, 24], ['Edit', 20, 24], ['View', 25, 24], ['Insert', 29, 24], ['Tools', 29, 24], ['Window', 44, 24], ['Help', 25, 0]];
        this.shadowRoot.innerHTML = `
        <style>
            :host { display: flex; align-items: center; height: 20px; background: #cfcfe4; }
            .catia { width: 18px; height: 17px; margin-left: 1px; margin-right: 2px; }
            .item { height: 20px; line-height: 20px; box-sizing: border-box; white-space: nowrap; }
            .item:nth-of-type(1) { background: #ffe4b0; padding-left: 7px; }
            .space { flex: 1; }
            .mdi { display: flex; gap: 1px; margin-right: 1px; }
            .mdi svg { box-sizing: border-box; width: 18px; height: 18px; background: #dcebf8; border: 1px solid #9db0c4; }
        </style>
        ${GLOBE}
        ${items.map(([t, w, gap], i) => `<div class="item" style="padding-right:${i ? gap : 17}px;margin-right:${i ? 0 : 7}px"><ui-label key w="${w}" text="${t}"></ui-label></div>`).join('')}
        <div class="space"></div>
        <div class="mdi">
            <svg viewBox="0 0 16 16"><path d="M5 11h6" stroke="#5f7080" stroke-width="2"/></svg>
            <svg viewBox="0 0 16 16"><path d="M6.500 7V4.500h6v4H10M4.500 7.500h5v4h-5z" fill="none" stroke="#5f7080" stroke-width="1.500"/></svg>
            <svg viewBox="0 0 16 16"><path d="M5 5l6 6M11 5l-6 6" stroke="#5f7080" stroke-width="2.200"/></svg>
        </div>`;
    }
}
customElements.define('menu-bar', MenuBar);

class PropertyBar extends HTMLElement {
    constructor() {
        super();
        this.attachShadow({ mode: 'open' });
        this.shadowRoot.innerHTML = `
        <style>
            :host {
                display: flex;
                align-items: center;
                gap: 4px;
                box-sizing: border-box;
                height: 36px;
                padding: 1px 0 0 6px;
                background: linear-gradient(#fff, #dcdcea 5px, #cfcfe4 9px, #cfcfe4 25px, #a4a4b8 34px, #9a9aac);
            }
            .grip { width: 1px; height: 15px; align-self: flex-start; margin: 2px 5px 0 0; background: #fff; border-right: 1px solid #9a9aa6; border-left: 1px solid #fff; }
            svg { overflow: visible; filter: drop-shadow(2px 2px 0 rgba(190, 190, 205, .8)); }
        </style>
        <div class="grip"></div>
        <ui-combo style="width:63px" value="Automatic"></ui-combo>
        <ui-combo style="width:63px" value="Auto"></ui-combo>
        <ui-combo style="width:63px" value="Auto"></ui-combo>
        <ui-combo style="width:63px" value="Auto"></ui-combo>
        <ui-combo style="width:41px" value="Auto"></ui-combo>
        <ui-combo style="width:40px" value="Auto" disabled></ui-combo>
        <ui-combo style="width:63px" value="None"></ui-combo>
        ${svg('brush')}${svg('wizard')}`;
    }
}
customElements.define('property-bar', PropertyBar);

class SpecTree extends HTMLElement {
    constructor() {
        super();
        this.attachShadow({ mode: 'open' });
        const rows = [
            ['part', 'T2 tlac', 0, 50, 8], ['plane', 'xy plane', 27, 62, 6], ['plane', 'yz plane', 27, 62, 6], ['plane', 'zx plane', 27, 62, 6],
            ['body', 'PartBody', 27, 68, 7], ['extref', 'External References', 27, 147, 7],
            ['hidden', 'Plane.1', 50, 54, 4], ['hidden', 'Point.1', 50, 52, 4], ['hidden', 'Point.2', 50, 52, 4],
        ];
        // hidden elements are drawn through a checkerboard veil
        const veil = (plane) => `<svg class="veil" width="29" height="29"><defs><pattern id="v" width="2" height="2" patternUnits="userSpaceOnUse"><path d="M0 0h1v1H0zM1 1h1v1H1z" fill="#d0d0d0"/></pattern></defs>
            ${plane ? '<path d="M12 20l9-8h6l-6 11H12z" fill="#d8cf80"/><path d="M13 22l9 0 5-7" stroke="#359a9c" fill="none" stroke-width="2"/>' : '<path d="M13 13h5v5h-5z" fill="#10105a"/>'}
            <path d="M0 0h29v29H0z" fill="url(#v)"/>${plane ? '<path d="M11 18l6-6h10l-5 7z" fill="#e8dc80" fill-opacity=".5"/>' : '<path d="M12 13h6v5h-6z" fill="#10105a" fill-opacity=".6"/>'}<path d="M1 22l5-5 5 5-5 5z" fill="#188c90"/><path d="M1 19l2-2M9 17l2 3M4 27l3 1 4-4" stroke="#ffe600" stroke-width="1.500" fill="none"/></svg>`;
        this.shadowRoot.innerHTML = `
        <style>
            :host { display: block; color: #fff; font-size: 16px; }
            .row { display: flex; align-items: center; height: 34.5px; }
            svg { overflow: visible; flex: none; display: block; }
            .veil { margin-top: -8px; shape-rendering: crispEdges; }
            ui-label { line-height: 24px; padding: 0 1px; margin-top: -1px; background: #353566; }
        </style>
        ${rows.map(([icon, text, left, w, gap]) => `<div class="row" style="padding-left:${left}px">
            ${icon === 'hidden' ? veil(text === 'Plane.1') : svg(icon)}
            <ui-label style="margin-left:${gap}px" w="${w}" text="${text}"></ui-label></div>`).join('')}`;
    }
}
customElements.define('spec-tree', SpecTree);

// Frame section, screen units of the full window
const FRAME = [
    // outside
    '363.6,418 365,403.3 372.5,366 397.1,316 436.8,270 471.4,242.7 492.9,225.7 562.5,188.7 610.7,169.3 660.7,153.7 771.4,131.3 878.6,122.7 905,122.7 1005,128.3 1115.7,148.7 1172.9,164.3 1219.3,181.7 1287.1,217.3 1340.7,256.7 1384.3,304.7 1410.4,355.7 1416.8,381.7 1418.9,405.3 1387.9,406.3 1387.9,437.7 1418.9,437.3 1421,540 1422.9,722.6 1423.9,840.9 1416.4,876.4 1393.2,911.9 1354.3,944.7 1317.5,967 1283.6,983.2 1222.9,1006.9 1165.7,1022.1 1038.9,1044.4 1038.2,1014 1007.1,1014 1007.1,1047.8 897.9,1053.9 790.4,1050.8 790.4,1016.7 758.6,1016.7 758.6,1047.8 633.9,1028.8 578.6,1014.6 523.2,996.4 475,975.4 441,955.1 401.8,922.7 377.1,888.2 368.9,854.4 366.8,722.6 364.6,540 363.6,449 396.4,449 395.4,418',
    // inside
    '488.2,476.7 487.9,416.7 494.3,386.7 515,357.3 544.6,330.7 578.6,311.7 616,294.3 701.8,268 807.1,251.7 891,247 921,247 1033.6,255.3 1090.7,266 1142.5,280 1187.1,295.3 1224.6,314 1262.9,343.3 1286.4,374 1295,406.7 1296.4,540 1298.9,840.9 1298.2,848.3 1286,863.9 1247.9,884.2 1183.6,901.4 1122.9,912.2 1046,921.3 897.9,929.1 742.9,924.4 671.4,917.6 614.3,908.8 546.4,891.6 523.9,882.8 506,872 493.9,856.1 492.9,786.8 490.4,607.6',
    // pockets
    '472.5,252.7 519.6,291.7 398.2,407.7 375,407.7 381.4,371.7 397.1,334 421.4,300 444.6,275.7',
    '481.4,246 517.9,222.7 561.4,200.3 649.3,168 527.9,283.7',
    '672.1,160.7 748.2,248.3 696.4,259.3 642,274.7 600,291 560,310 535.7,291',
    '683.9,158 776.8,140.7 870.7,133.3 761.4,247',
    '883.9,132.7 893.6,132.7 999.6,241.3 888,235.7 780,244',
    '907.5,133.3 999.6,138 1092.9,153 1018.2,244.3',
    '1105.4,155.7 1245.4,282 1220.7,302.3 1187,286 1140.7,269 1090.7,255.7 1031.4,245.3',
    '1128.9,162.3 1219.3,192.7 1263.9,215 1297.1,236.3 1252.5,275.3',
    '1306.4,243 1337.1,266.7 1360.4,290.7 1384.3,324 1401.4,359 1408.2,395.7 1383.9,395.7 1260.7,282.3',
    '1252.5,290 1377.5,403.3 1378.2,440 1306,510 1305,403.3 1302.9,390 1296.8,372.3 1271,339 1231,308.7',
    '527.9,297.7 551,316.3 510.7,347.3 485.7,381 478.9,400.7 478.6,518.3 406,451.7 406,413.3',
    '375,460 398.2,459.3 478.9,532.7 479.6,548 377.1,655.6',
    '478.6,563 482.1,780.7 378.2,696.2 377.1,671.2',
    '378.2,709.7 482.1,794.2 483.6,856.1 491.8,869.6 507.1,882.5 530.4,893.6 460,955.8 416,923 388.6,888.2 381.4,869.6 378.9,847.6',
    '542.9,899 617.9,918 587.5,1007.5 523.2,986.2 470.4,961.6',
    '628.6,921 637.5,921.7 748.6,1013.3 748.6,1036.3 667.9,1025.1 597.9,1009.9',
    '658.2,925.7 748.2,935.5 860.7,939.9 792.9,1005.9 756.1,1005.9',
    '875,939.9 919.3,939.9 996.8,1010.6 996.8,1038.3 897.9,1042.7 800.7,1040.7 800,1013.3',
    '934.3,939.3 1037,932.5 1136.4,920.3 1041,1002.8 1003.2,1003.5',
    '1158.6,915.3 1166.8,914.6 1198.9,1003.2 1130,1019.4 1048.9,1032.9 1048.2,1009.9',
    '1176.8,912.5 1252.5,890.9 1325.7,951.8 1274.6,977.1 1209.3,999.4',
    '1308.6,787.1 1412.1,697.5 1413.6,839.2 1411.4,858.5 1405,877 1378.9,913.2 1335.4,945.7 1262.9,886.2 1287.1,873.3 1301.4,860.5 1309.6,846',
    '1307.1,552.8 1411,658.3 1412.1,684.7 1308.6,771.9',
    '1385,448 1408.9,448 1410.7,643.4 1307.1,539 1306.4,524',
];

class PartView extends HTMLElement {
    constructor() {
        super();
        this.attachShadow({ mode: 'open' });
        this.shadowRoot.innerHTML = `
        <style>
            :host {
                display: block;
                position: relative;
                overflow: hidden;
                box-sizing: border-box;
                border: 2px solid #777785;
                border-color: #6d6d70 transparent transparent #777785;
                border-width: 2px 0 0 2px;
                background: linear-gradient(#333363, #464674 668px, #55547c 710px, #a9a9be 1000px) padding-box;
            }
            svg.canvas { position: absolute; left: 0; top: 0; }
            spec-tree { position: absolute; left: 0; top: 2px; }
            text { font-family: "Noto Sans", sans-serif; font-size: 13px; }
        </style>
        <svg class="canvas" width="1863" height="1001" viewBox="10 88 1863 1001">
            <defs>
                <radialGradient id="ball" cx=".35" cy=".3"><stop offset="0" stop-color="#ddd"/><stop offset="1" stop-color="#666"/></radialGradient>
                <pattern id="dots" width="2" height="2" patternUnits="userSpaceOnUse"><path d="M0 0h1v1H0zM1 1h1v1H1z" fill="#141450"/></pattern>
            </defs>
            <path d="${FRAME.map(p => 'M' + p + 'z').join('')}" fill="#a3a3c8" fill-rule="evenodd" stroke="#000" stroke-width="2" shape-rendering="crispEdges"/>
            <path d="M876.500 397.500h30v30h-30zM891.500 397v31M876 412.500h31" fill="none" stroke="#fff" shape-rendering="crispEdges"/>
            <path d="M20 112v163M20 138h14M20 172h14M20 207h15M20 241h14M20 276h15M45 288v92h14M45 311h14M45 345h14" fill="none" stroke="#fff" stroke-width="2"/>
            <circle cx="20.500" cy="241" r="7.500" fill="url(#ball)"/><path d="M16 241h9M20.500 236.500v9" stroke="#000" stroke-width="2"/>
            <circle cx="20.500" cy="275.500" r="7.500" fill="url(#ball)"/><path d="M16 275h9" stroke="#000" stroke-width="2"/>
            <path d="M1776 184.500q-8-7-7-18 1-21 22-24 13-1 21 7v35.500z" fill="url(#dots)" stroke="#dcc4ff" stroke-width="2"/>
            <path d="M1793 132v34M1760 167h35" stroke="#dcc4ff" stroke-width="2"/>
            <path d="M1789 162h9v9h-9z" fill="#d00000"/>
            <g fill="#ffee00"><text x="1784" y="127">y</text><text x="1752" y="159">x</text><text x="1786" y="160">z</text></g>
            <g fill="#fff"><text x="1847" y="1051">y</text><text x="1830" y="1068">x</text><text x="1848" y="1068">z</text></g>
            <path d="M1847.500 1052v16.500h-17" fill="none" stroke="#fff"/>
        </svg>
        <spec-tree></spec-tree>`;
    }
}
customElements.define('part-view', PartView);

class StatusBar extends HTMLElement {
    constructor() {
        super();
        this.attachShadow({ mode: 'open' });
        this.shadowRoot.innerHTML = `
        <style>
            :host { display: flex; align-items: center; box-sizing: border-box; height: 25px; padding-left: 3px; background: #cfcfe4; border-top: 1px solid #55555f; }
            .space { flex: 1; }
            .input { width: 297px; height: 18px; background: #fff; border: 1px solid; border-color: #555 #fff #fff #555; }
            .btn { width: 32px; height: 20px; border: 1px solid; border-color: #fff #8a8a96 #8a8a96 #fff; display: flex; align-items: center; justify-content: center; }
        </style>
        <ui-label w="164" text="Select an object or a command"></ui-label>
        <div class="space"></div>
        <div class="input"></div>
        <div class="btn"><svg width="16" height="14"><path d="M3 2h7v6H3zM1 12h13V2" fill="none" stroke="#9a9aa6" stroke-width="1.500"/><path d="M11 9h2" stroke="#9a9aa6" stroke-width="2"/></svg></div>
        <div class="btn"><svg width="16" height="14"><circle cx="7" cy="6" r="5" fill="none" stroke="#9a9aa6" stroke-width="1.500"/><path d="M5 5h2v4M5 9h4M6.500 2.500h1M2 12.500h12V2" fill="none" stroke="#9a9aa6" stroke-width="1.500"/></svg></div>`;
    }
}
customElements.define('status-bar', StatusBar);

class CatiaWindow extends HTMLElement {
    constructor() {
        super();
        this.attachShadow({ mode: 'open' });
        this.shadowRoot.innerHTML = `
        <style>
            :host {
                display: block;
                box-sizing: border-box;
                height: 1161px;
                background: #15171d;
                border-right: 2px solid #26303d;
            }
            .glass {
                height: 1159px;
                border-radius: 6px;
                overflow: hidden;
                box-sizing: border-box;
                background: linear-gradient(#8ba2c6, #a2b4cc 130px, #dceaf8 200px, #e4f0fa 305px, #94b0cf 311px, #a9c4e2);
                border: 1px solid #c4dcf0;
                border-top: 0;
            }
            .client { margin: 0 6px; border: 1px solid #4a5868; border-top-color: #dbe7f4; width: 1904px; box-sizing: border-box; }
            .middle { display: flex; height: 1003px; }
            part-view { width: 1865px; }
            .side { width: 37px; background: linear-gradient(to right, #fff, #fff 2px, #e6e6f2 5px, #cfcfe4 10px, #cfcfe4 28px, #a4a4b8); }
            .bottom { display: flex; justify-content: space-between; height: 37px; background: linear-gradient(#fff, #f4f4fa 4px, #d6d6e6 9px, #cfcfe4 20px, #cfcfe4 25px, #a4a4b8 36px); }
            .bottom tool-strip { box-sizing: border-box; height: 37px; padding-top: 5px; }
            .logo { margin: 1px 5px 0 0; }
        </style>
        <div class="glass">
            <title-bar></title-bar>
            <div class="client">
                <menu-bar></menu-bar>
                <property-bar></property-bar>
                <div class="middle">
                    <part-view></part-view>
                    <div class="side"><tool-strip set="side"></tool-strip></div>
                </div>
                <div class="bottom">
                    <tool-strip set="bottom"></tool-strip>
                    <svg class="logo" width="42" height="34" viewBox="0 0 42 34">
                        <path d="M10 1q9 0 7 3-2 3-6 4 5 0 3 3" fill="none" stroke="#e02020" stroke-width="2.200"/>
                        <path d="M5 12h4q7 0 4 5-3 5-11 5l5-9" fill="none" stroke="#3a2a80" stroke-width="2"/>
                        <path d="M24 8q-7 0-7 3 6 3 6 7-1 3-8 2" fill="none" stroke="#f09020" stroke-width="2.500"/>
                        <text x="8" y="30" font-family="Liberation Sans, sans-serif" font-size="9" font-weight="bold" font-style="italic" textLength="32" fill="#4a2080">CATIA</text>
                    </svg>
                </div>
                <status-bar></status-bar>
            </div>
        </div>`;
    }
}
customElements.define('catia-window', CatiaWindow);

const APPS = [
    ['ie', 0, `<circle cx="17" cy="19" r="10" fill="none" stroke="#5cc4f4" stroke-width="6"/><path d="M8 18h18v4H8z" fill="#8bdcff"/><path d="M23 23h9v4h-9z" fill="#2060a8"/><path d="M4 31C-4 25 22-4 30 6q2 3-2 8" fill="none" stroke="#ffc82c" stroke-width="3"/>`],
    ['explorer', 1, `<path d="M2 5l10-2 3 3h14l3 3v19H2z" fill="#e8c868"/><path d="M1 10h31l-1 20H3z" fill="#ffe9a0"/><path d="M6 3h6v3H6zM14 5h6v3h-6z" fill="#48a848"/><path d="M22 6h7v3h-7z" fill="#e05040"/><path d="M6 32V20h21v12h-5v-6H11v6z" fill="#8cd0f0" stroke="#d8f2ff"/>`],
    ['chrome', 0, `<circle cx="17" cy="17" r="14" fill="#3aa84c"/><path d="M17 17L4.500 11A14 14 0 0 1 30 12z" fill="#e03c30"/><path d="M17 17l13-6a14 14 0 0 1-13 20z" fill="#ffd21c"/><circle cx="17" cy="17" r="6.800" fill="#fff"/><circle cx="17" cy="17" r="5.200" fill="#3a7ce0"/>`],
    ['firefox', 0, `<circle cx="17" cy="17" r="14.500" fill="#e8661c"/><circle cx="16" cy="13" r="11" fill="#1f5fae"/><path d="M13 4q8-3 12 3l-4 5-5-2z" fill="#58b4e8"/><path d="M3 8l3 3q4-2 6 2 4 1 3 3-4 1-2 5 4 4 9 0 4-5 2-12 8 9 3 17-5 6-12 5Q-1 28 3 8z" fill="#f08020"/><path d="M28 10q4 11-5 17" stroke="#ffd040" stroke-width="2.500" fill="none"/>`],
    ['bing dark', 1, `<path d="M1 1h32v32H1z" fill="#ffb400"/><path d="M5 9h24v16H5z" fill="#444"/><path d="M13 12v8l2 1 6-4-5-2 1 3-2 1v-6z" fill="#ffb400"/><path d="M11 27.500h12" stroke="#444"/>`],
    ['word dark', 1, `<path d="M4 1h27v29H4z" fill="#e8eef8"/><path d="M3 0h24v28H3z" fill="#dce8fa" stroke="#7aa0dc"/><path d="M6 6l4 14 5-12 4 12 5-14" fill="none" stroke="#1c50a8" stroke-width="4"/><path d="M22 17h9v9h-9z" fill="#fff" stroke="#9cb4d8"/>`],
    ['catia lit', 1, `<path d="M2 2h30v30H2z" fill="#fff"/><path d="M4 4h26v26H4z" fill="#050508"/><path d="M5 5q10 8 14 24l5 1Q20 14 8 5z" fill="#268ce0"/><path d="M6 12l9 17H7z" fill="#0b325c"/><path d="M9 7l7 3 5-5 1 6 7 2-6 5 2 8-7-6-6-9z" fill="#d86a20"/><path d="M14 11l8-3v5l4 2-5 3z" fill="#ffe8b0"/>`],
    ['paint', 1, `<path d="M6 10q8-8 20 0 5 6 2 13-3 6-7 3-2-4-5-2-2 3 0 5-11 2-14-7-1-7 4-12z" fill="#bfe0f4"/><circle cx="7" cy="18" r="3" fill="#e04030"/><circle cx="11" cy="12" r="3" fill="#48b040"/><circle cx="18" cy="10" r="3" fill="#f0a020"/><circle cx="15" cy="19" r="2.500" fill="#305890"/><path d="M30 6L18 31" stroke="#e89840" stroke-width="2.600"/><path d="M25 2q6-3 8 3l-4 5-4-2z" fill="#c89060"/>`],
];

class TaskBar extends HTMLElement {
    constructor() {
        super();
        this.attachShadow({ mode: 'open' });
        const dots = '<svg class="dots" width="9" height="31"><defs><pattern id="d" width="3" height="3" patternUnits="userSpaceOnUse"><path d="M0 0h1v1H0z" fill="#8ea0c8"/></pattern></defs><path d="M0 0h9v31H0z" fill="url(#d)"/></svg>';
        this.shadowRoot.innerHTML = `
        <style>
            :host {
                display: flex;
                align-items: center;
                height: 39px;
                color: #fff;
                background:
                    linear-gradient(rgba(170, 190, 220, .45) 0, rgba(10, 15, 30, .25) 1px, transparent 10px),
                    radial-gradient(ellipse 160px 26px at 1590px 8px, rgba(5, 10, 25, .9), transparent),
                    radial-gradient(ellipse 110px 30px at 1190px 16px, rgba(10, 20, 70, .6), transparent),
                    linear-gradient(to right, #050914 0, #0b1a44 60px, #1c3e86 110px, #1f4a94 250px, #264a8c 580px, #34559a 800px, #274282 1000px, #2b4c90 1150px, #35589c 1350px, #385c9e 1480px, #142248 1580px, #0a1020 1650px, #131f45 1720px, #172753);
            }
            .orb { margin: 0 11px 0 9px; }
            .apps { display: flex; gap: 4px; margin-left: 9px; height: 38px; }
            .app { box-sizing: border-box; width: 58px; height: 38px; display: flex; align-items: center; justify-content: center; border: 1px solid transparent; border-radius: 3px; }
            .run { border-color: #8fa4c8; background: linear-gradient(135deg, rgba(220, 230, 245, .6), rgba(110, 135, 180, .4) 50%, rgba(90, 115, 165, .45)); }
            .dark { background: linear-gradient(135deg, #8a929e, #2c3038 45%, #14171c); }
            .lit { background: linear-gradient(135deg, #e8ecf4, #a4aec4 50%, #8894b0); }
            .space { flex: 1; }
            .tray { display: flex; align-items: center; }
            .clock { display: flex; flex-direction: column; align-items: center; width: 54px; line-height: 17px; }
            .peek { width: 13px; height: 38px; margin-left: 11px; border: 1px solid #7583a2; background: linear-gradient(#46557c, #1e2c54); box-sizing: border-box; }
        </style>
        <svg class="orb" width="37" height="37" viewBox="0 0 37 37">
            <defs><radialGradient id="o" cx=".5" cy=".85" r=".8"><stop offset="0" stop-color="#3fc4f0"/><stop offset=".5" stop-color="#1a5a90"/><stop offset="1" stop-color="#7f9cb8"/></radialGradient></defs>
            <circle cx="18" cy="18.500" r="17.500" fill="url(#o)" stroke="#3c5070"/>
            <path d="M10 11q4-3 8-1l-2 8q-4-2-8 0z" fill="#f06428"/><path d="M19 11q5 2 10-1l-2 8q-5 3-10 0z" fill="#8cc83c"/><path d="M8 20q4-3 8-1l-2 8q-4-2-8 0z" fill="#3c9ce8"/><path d="M17 20q5 3 9 0l-2 8q-5 3-9 0z" fill="#ffcc30"/>
        </svg>
        ${dots}
        <div class="apps">${APPS.map(([cls, run, art]) => `<div class="app ${run ? 'run' : ''} ${cls}"><svg width="32" height="32" viewBox="0 0 34 34">${art}</svg></div>`).join('')}</div>
        <div class="space"></div>
        <div class="tray">
            ${dots}
            <ui-label style="margin:-5px 18px 0 8px" w="14" text="EN"></ui-label>
            <svg width="7" height="5"><path d="M0 4.500L3.500 0 7 4.500z" fill="#fff"/></svg>
            <svg width="15" height="16" style="margin-left:14px"><path d="M1.500 1v15" stroke="#fff" stroke-width="2"/><path d="M3 2h5l1 1.500h5l-2 5H8L7 7H3z" fill="#fff"/></svg>
            <svg width="16" height="14" style="margin-left:8px"><path d="M1.500 10v3M4.500 9v4M7.500 6.500v6.500M10.500 4v9M13.500 1v12" stroke="#fff" stroke-width="2"/></svg>
            <svg width="15" height="14" style="margin-left:9px"><path d="M0 4h3l4-4v14l-4-4H0z" fill="#fff"/><path d="M9 4q2 3 0 6M11 2.500q3 4.500 0 9M13 1q4 6 0 12" fill="none" stroke="#ddd"/></svg>
            <div class="clock" style="margin-left:15px"><ui-label w="43" text="3:11 PM"></ui-label><ui-label w="52" text="2/12/2014"></ui-label></div>
            <div class="peek"></div>
        </div>`;
    }
}
customElements.define('task-bar', TaskBar);
</script>
</body>
</html>
